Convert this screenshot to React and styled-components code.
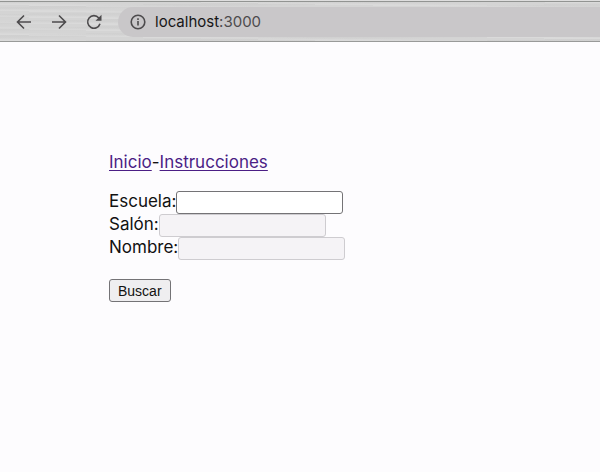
import React from "react";
import styled, { createGlobalStyle } from "styled-components";

const GlobalStyle = createGlobalStyle`
  * { box-sizing: border-box; }
  body {
    margin: 0;
    background: #fdfcfe;
    color: #111;
    font-family: Inter, "Liberation Sans", sans-serif;
  }
`;

const Toolbar = styled.header`
  display: flex;
  align-items: center;
  height: 42px;
  padding: 2px 0 0 13px;
  background:
    repeating-linear-gradient(1deg, #ffffff24 0 1px, #ffffff00 3px 6px),
    repeating-linear-gradient(179deg, #a8a8a814 0 2px, #a8a8a800 4px 7px),
    #d4d4d4;
  border-bottom: 1px solid #999a99;
  box-shadow: inset 0 1px #dedede, inset 0 2px #929492;
`;

const NavButton = styled.button`
  display: flex;
  align-items: center;
  justify-content: center;
  width: 22px;
  height: 28px;
  margin-right: 13px;
  padding: 0;
  border: 0;
  background: none;
  color: #4d4b4d;
`;

const Icon = styled.svg`
  flex: none;
  width: 16px;
  height: 16px;
  fill: none;
  stroke: currentColor;
  stroke-width: 1.6;
`;

const AddressBar = styled.div`
  display: flex;
  flex: 1;
  align-items: center;
  gap: 9px;
  height: 30px;
  padding-left: 12px;
  border-radius: 15px 0 0 15px;
  background: #c9c7c9;
  color: #4d4b4d;
`;

const Address = styled.span`
  font-size: 15px;
  line-height: 20px;
`;

const Host = styled.span`
  color: #171617;
`;

const Page = styled.main`
  padding: 109px 16px 16px 109px;
  font-size: 17px;
  line-height: 22px;
`;

const Nav = styled.nav`
  margin-bottom: 18px;
`;

const PageLink = styled.a`
  color: #4b1e85;
  text-decoration-thickness: 1px;
  text-underline-offset: 2px;
`;

const Field = styled.div`
  display: flex;
  align-items: flex-start;
`;

const FieldLabel = styled.label`
  line-height: 20px;
`;

const TextInput = styled.input`
  width: 167px;
  height: 23px;
  padding: 1px 3px;
  border: 1px solid #747376;
  border-radius: 3px;
  background: #fff;
  font: 14px "Liberation Sans", sans-serif;

  &:disabled {
    border-color: #ceccd0;
    background: #f5f3f6;
  }
`;

const SubmitButton = styled.button`
  height: 23px;
  margin-top: 19px;
  padding: 0 8px;
  border: 1px solid #747376;
  border-radius: 3px;
  background: #efeef0;
  color: #111;
  font: 14px/20px "Liberation Sans", sans-serif;
`;

const fields = [
  { id: "escuela", label: "Escuela:", disabled: false },
  { id: "salon", label: "Salón:", disabled: true },
  { id: "nombre", label: "Nombre:", disabled: true },
];

export default function App() {
  return (
    <>
      <GlobalStyle />
      <Toolbar>
        <NavButton aria-label="Atrás">
          <Icon viewBox="0 0 16 16">
            <path d="M15 8H2M8 1.5 1.5 8 8 14.5" />
          </Icon>
        </NavButton>
        <NavButton aria-label="Adelante">
          <Icon viewBox="0 0 16 16">
            <path d="M1 8h13M8 1.5 14.5 8 8 14.5" />
          </Icon>
        </NavButton>
        <NavButton aria-label="Recargar">
          <Icon viewBox="0 0 16 16">
            <path d="M14 9.8A6.3 6.3 0 1 1 12.8 3.9" />
            <path d="M15.5.8v6H9.5Z" fill="currentColor" stroke="none" />
          </Icon>
        </NavButton>
        <AddressBar>
          <Icon viewBox="0 0 16 16">
            <circle cx="8" cy="8" r="6.8" />
            <path d="M8 7v4.5M8 4.3v1.7" />
          </Icon>
          <Address>
            <Host>localhost</Host>:3000
          </Address>
        </AddressBar>
      </Toolbar>
      <Page>
        <Nav>
          <PageLink href="#inicio">Inicio</PageLink>-
          <PageLink href="#instrucciones">Instrucciones</PageLink>
        </Nav>
        <form onSubmit={(event) => event.preventDefault()}>
          {fields.map(({ id, label, disabled }) => (
            <Field key={id}>
              <FieldLabel htmlFor={id}>{label}</FieldLabel>
              <TextInput id={id} type="text" disabled={disabled} />
            </Field>
          ))}
          <SubmitButton type="submit">Buscar</SubmitButton>
        </form>
      </Page>
    </>
  );
}
